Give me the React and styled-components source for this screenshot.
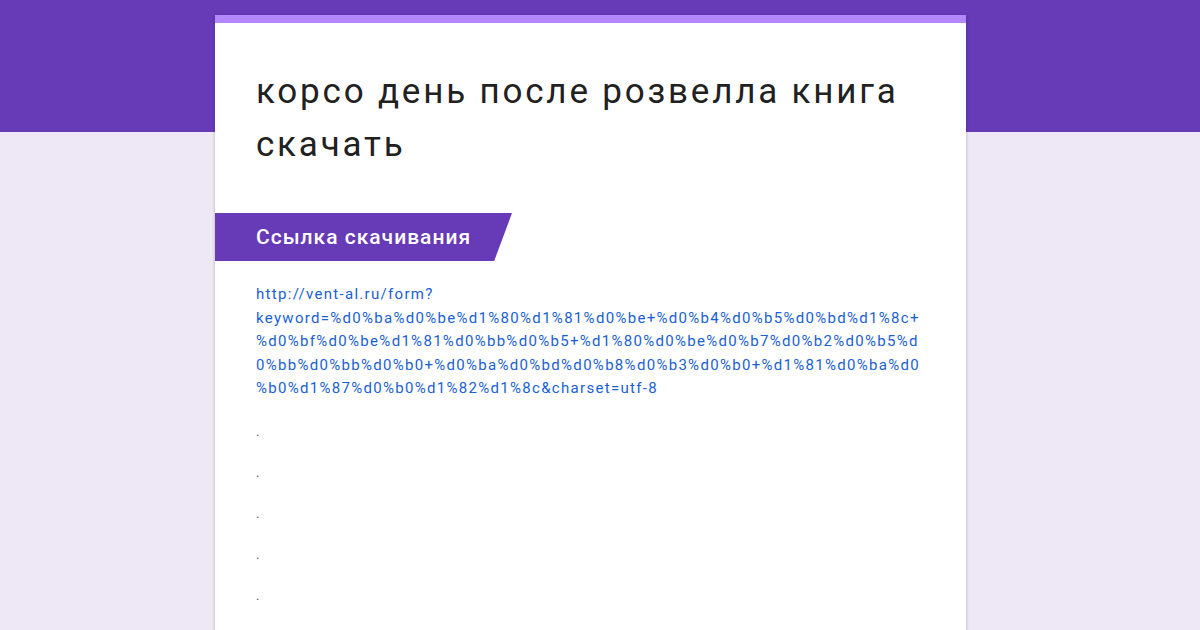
import React from "react";
import styled, { createGlobalStyle } from "styled-components";

const Global = createGlobalStyle`
  body { margin: 0; background: #ede7f6; font-family: Roboto, "Noto Sans", sans-serif; }
`;
const Page = styled.div`
  position: relative; width: 1200px; height: 630px; overflow: hidden;
  background: linear-gradient(#673ab7 0 132px, #ede7f6 132px);
  padding-top: 15px; box-sizing: border-box;
`;
const Card = styled.div`
  width: 751px; margin-left: 215px; background: #fff; min-height: 640px;
  border-top: 8px solid #b388ff;
  box-shadow: 0 1px 3px rgba(0,0,0,0.25);
`;
const Title = styled.h1`
  margin: 0; padding: 42px 30px 0 41px;
  font-weight: 400; font-size: 35px; line-height: 53px; color: #212121;
  letter-spacing: 2.8px;
`;
const Banner = styled.div`
  margin-top: 42px; height: 48px; width: 297px; background: #673ab7;
  clip-path: polygon(0 0, 100% 0, 94% 100%, 0 100%);
  color: #fff; font-size: 21px; font-weight: 500; letter-spacing: 1px;
  display: flex; align-items: center; padding-left: 41px; box-sizing: border-box;
`;
const Body = styled.div`
  padding: 22px 20px 0 41px; font-size: 15px;
`;
const Link = styled.a`
  color: #1a5fd4; text-decoration: none; line-height: 23.5px; display: block;
  letter-spacing: 1.3px;
  span { display: block; white-space: nowrap; }
`;
const Dot = styled.div`
  color: #555; font-size: 13px; line-height: 41px; height: 41px;
  &:first-of-type { margin-top: 10px; }
`;

const lines = [
  "http://vent-al.ru/form?",
  "keyword=%d0%ba%d0%be%d1%80%d1%81%d0%be+%d0%b4%d0%b5%d0%bd%d1%8c+",
  "%d0%bf%d0%be%d1%81%d0%bb%d0%b5+%d1%80%d0%be%d0%b7%d0%b2%d0%b5%d",
  "0%bb%d0%bb%d0%b0+%d0%ba%d0%bd%d0%b8%d0%b3%d0%b0+%d1%81%d0%ba%d0",
  "%b0%d1%87%d0%b0%d1%82%d1%8c&charset=utf-8",
];

export default function App() {
  return (
    <Page>
      <Global />
      <Card>
        <Title>корсо день после розвелла книга<br />скачать</Title>
        <Banner>Ссылка скачивания</Banner>
        <Body>
          <Link href="#">{lines.map((l) => <span key={l}>{l}</span>)}</Link>
          {[0,1,2,3,4].map((i) => <Dot key={i}>.</Dot>)}
        </Body>
      </Card>
    </Page>
  );
}
